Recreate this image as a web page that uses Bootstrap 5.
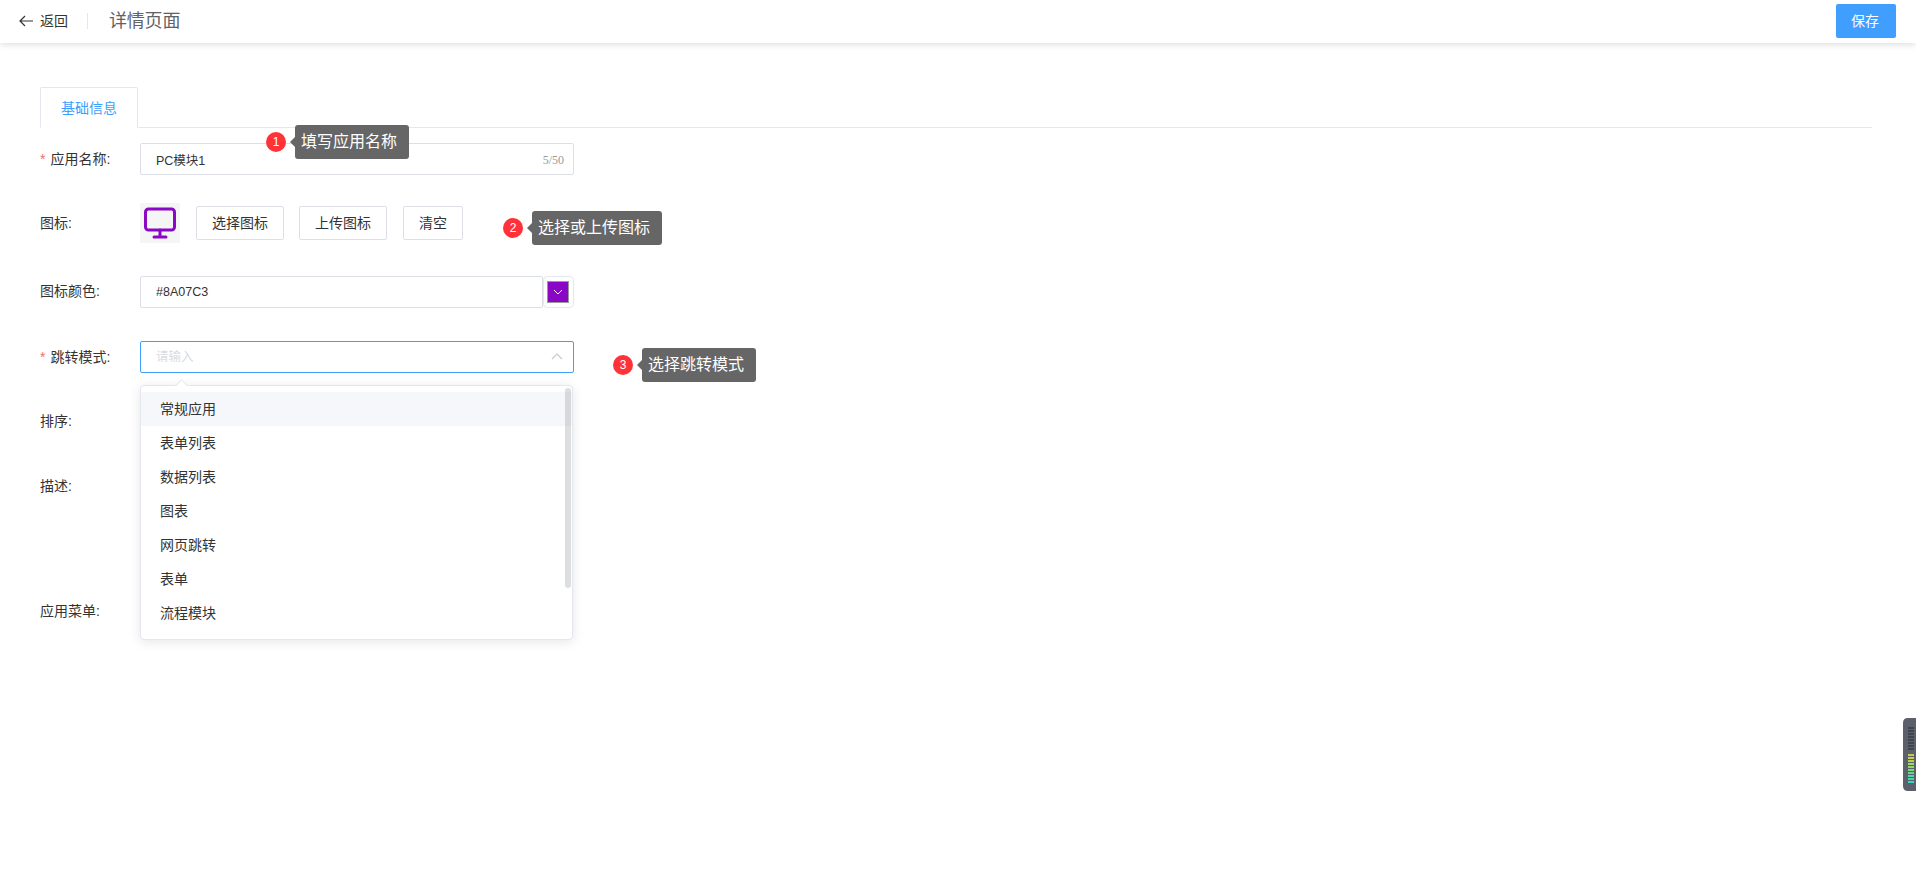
<!DOCTYPE html>
<html lang="zh-CN">
<head>
    <meta charset="UTF-8">
    <meta name="viewport" content="width=device-width, initial-scale=1">
    <title>详情页面</title>
    <link href="https://cdn.jsdelivr.net/npm/bootstrap@5.3.0/dist/css/bootstrap.min.css" rel="stylesheet">
    <style>
        body { font-family: "Liberation Sans", "Noto Sans CJK SC", sans-serif; font-size: 14px; color: #333; background: #fff; overflow: hidden; }
        .top-bar { height: 43px; padding: 0 20px 1px 19px; background: #fff; box-shadow: 0 2px 6px rgba(0, 0, 0, .12); }
        .back-link { color: #333; text-decoration: none; line-height: 20px; }
        .back-arrow { margin-right: 7px; }
        .bar-divider { width: 1px; height: 16px; background: #e4e7ed; margin: 0 21px 0 19px; }
        .page-title { font-size: 18px; letter-spacing: -.2px; color: #606266; line-height: 24px; }
        .save-btn { width: 60px; height: 34px; padding: 0 2px 0 0; font-size: 14px; background: #409eff; border: 0; border-radius: 2px; color: #fff; }
        .page-body { padding: 44px 44px 0 40px; }
        .nav-tabs { --bs-nav-tabs-border-color: #e4e7ed; --bs-nav-tabs-border-radius: 2px; --bs-nav-tabs-link-active-border-color: #e4e7ed #e4e7ed #fff; --bs-nav-tabs-link-active-color: #409eff; }
        .nav-tabs .nav-link { width: 98px; height: 41px; padding: 0; line-height: 41px; text-align: center; font-size: 14px; }
        .form-line { margin-bottom: 32px; }
        .form-line.first-line { margin-top: 15px; margin-bottom: 28px; }
        .form-line.icon-line { margin-bottom: 33px; }
        .form-line.color-line { margin-bottom: 33px; }
        .line-label { width: 100px; flex: none; line-height: 20px; }
        .color-line .line-label { padding-bottom: 2px; }
        .desc-label { padding-top: 7px; }
        .required-mark { color: #f56c6c; margin-right: 5px; }
        .field-box { width: 434px; }
        .field-box.under-menu { width: 432px; }
        .form-control.plain-input { height: 32px; padding: 0 15px; font-size: 12.5px; color: #333; border-color: #dcdfe6; border-radius: 2px; box-shadow: none; }
        .form-control.plain-input::placeholder { color: #dadce0; }
        .form-control.open-input { border-color: #409eff; }
        .form-control.plain-area { height: 94px; border-color: #dcdfe6; border-radius: 2px; }
        .word-count { right: 10px; top: 9px; font-family: "Liberation Serif", serif; font-size: 12px; line-height: 16px; color: #999; }
        .up-arrow { right: 11px; top: 11px; }
        .icon-preview { width: 40px; height: 40px; background: #f5f5f5; border-radius: 2px; margin-right: 16px; }
        .plain-btn { height: 34px; padding: 0 15px; font-size: 14px; line-height: 32px; color: #333; background: #fff; border: 1px solid #dcdfe6; border-radius: 2px; margin-right: 15px; }
        .plain-btn.wide-gap { margin-right: 16px; }
        .color-input { width: 403px; flex: none; }
        .color-picker { width: 31px; height: 32px; padding-right: 1px; border: 1px solid #e4e7ed; border-radius: 4px; }
        .color-swatch { width: 22px; height: 22px; background: #8a07c3; border: 1px solid #999; }
        .tip-wrap { height: 34px; z-index: 5; }
        .tip-one { left: 226px; top: -18px; }
        .tip-two { left: 463px; top: 8px; }
        .tip-three { left: 573px; top: 7px; }
        .tip-num { width: 20px; height: 20px; margin-right: 9px; border-radius: 50%; background: #ff3237; color: #fff; font-size: 12px; line-height: 20px; text-align: center; }
        .tip-text { height: 34px; padding: 0 12px 0 6px; background: #666; color: #fff; font-size: 16px; line-height: 34px; border-radius: 3px; white-space: nowrap; }
        .tip-text::before { content: ""; position: absolute; left: -5px; top: 12px; border: 5px solid transparent; border-left: 0; border-right-color: #666; }
        .mode-menu { left: 100px; top: 44px; width: 433px; height: 255px; padding: 6px 0 0; margin: 0; border: 1px solid #e4e7ed; border-radius: 4px; box-shadow: 0 2px 12px rgba(0, 0, 0, .1); z-index: 4; }
        .mode-menu::before { content: ""; position: absolute; left: 36px; top: -5px; width: 9px; height: 9px; background: #fff; border-left: 1px solid #e4e7ed; border-top: 1px solid #e4e7ed; transform: rotate(45deg); }
        .mode-menu .dropdown-item { height: 34px; padding: 0 19px; line-height: 34px; font-size: 14px; color: #333; }
        .mode-menu .dropdown-item.hovered { background: #f5f7fa; }
        .menu-scroll { right: 1px; top: 2px; width: 6px; height: 200px; background: rgba(144, 147, 153, .3); border-radius: 3px; }
        .side-widget { position: fixed; right: 0; top: 718px; }
    </style>
</head>
<body>
    <header class="top-bar d-flex align-items-center justify-content-between">
        <div class="d-flex align-items-center">
            <a href="#" class="back-link d-flex align-items-center">
                <svg width="14" height="12" viewBox="0 0 14 12" class="back-arrow" fill="none" stroke="#333" stroke-width="1.2"><path d="M14 6H1M6 1 1 6l5 5"/></svg>
                返回
            </a>
            <span class="bar-divider"></span>
            <span class="page-title">详情页面</span>
        </div>
        <button class="save-btn" type="button">保存</button>
    </header>

    <div class="page-body">
        <ul class="nav nav-tabs">
            <li class="nav-item"><a class="nav-link active" href="#">基础信息</a></li>
        </ul>

        <div class="form-line first-line d-flex align-items-center position-relative">
            <label class="line-label"><span class="required-mark">*</span>应用名称:</label>
            <div class="field-box position-relative">
                <input type="text" class="form-control plain-input" value="PC模块1">
                <span class="word-count position-absolute">5/50</span>
            </div>
            <div class="tip-wrap tip-one position-absolute d-flex align-items-center">
                <span class="tip-num">1</span>
                <span class="tip-text position-relative">填写应用名称</span>
            </div>
        </div>

        <div class="form-line icon-line d-flex align-items-center position-relative">
            <label class="line-label">图标:</label>
            <div class="icon-preview d-flex align-items-center justify-content-center">
                <svg width="32" height="32" viewBox="0 0 32 32" fill="none" stroke="#8a07c3" stroke-width="3" stroke-linecap="round"><rect x="1.5" y="2" width="29" height="21" rx="3"/><path d="M16 23v6M10 30h12"/></svg>
            </div>
            <button class="plain-btn" type="button">选择图标</button>
            <button class="plain-btn wide-gap" type="button">上传图标</button>
            <button class="plain-btn" type="button">清空</button>
            <div class="tip-wrap tip-two position-absolute d-flex align-items-center">
                <span class="tip-num">2</span>
                <span class="tip-text position-relative">选择或上传图标</span>
            </div>
        </div>

        <div class="form-line color-line d-flex align-items-center">
            <label class="line-label">图标颜色:</label>
            <div class="field-box d-flex">
                <input type="text" class="form-control plain-input color-input" value="#8A07C3">
                <div class="color-picker d-flex align-items-center justify-content-center">
                    <div class="color-swatch d-flex align-items-center justify-content-center">
                        <svg width="10" height="6" viewBox="0 0 10 6" fill="none" stroke="#fff" stroke-width="1"><path d="m1 1 4 4 4-4"/></svg>
                    </div>
                </div>
            </div>
        </div>

        <div class="form-line d-flex align-items-center position-relative">
            <label class="line-label"><span class="required-mark">*</span>跳转模式:</label>
            <div class="field-box position-relative">
                <input type="text" class="form-control plain-input open-input" placeholder="请输入">
                <svg class="up-arrow position-absolute" width="12" height="8" viewBox="0 0 12 8" fill="none" stroke="#c7c9ce" stroke-width="1.2"><path d="m1 7 5-5 5 5"/></svg>
            </div>
            <ul class="mode-menu dropdown-menu d-block list-unstyled">
                <li><a class="dropdown-item hovered" href="#">常规应用</a></li>
                <li><a class="dropdown-item" href="#">表单列表</a></li>
                <li><a class="dropdown-item" href="#">数据列表</a></li>
                <li><a class="dropdown-item" href="#">图表</a></li>
                <li><a class="dropdown-item" href="#">网页跳转</a></li>
                <li><a class="dropdown-item" href="#">表单</a></li>
                <li><a class="dropdown-item" href="#">流程模块</a></li>
                <li class="menu-scroll position-absolute"></li>
            </ul>
            <div class="tip-wrap tip-three position-absolute d-flex align-items-center">
                <span class="tip-num">3</span>
                <span class="tip-text position-relative">选择跳转模式</span>
            </div>
        </div>

        <div class="form-line d-flex align-items-center">
            <label class="line-label">排序:</label>
            <div class="field-box under-menu"><input type="text" class="form-control plain-input"></div>
        </div>

        <div class="form-line d-flex align-items-start">
            <label class="line-label desc-label">描述:</label>
            <div class="field-box under-menu"><textarea class="form-control plain-area"></textarea></div>
        </div>

        <div class="form-line d-flex align-items-center">
            <label class="line-label">应用菜单:</label>
            <div class="field-box under-menu"><input type="text" class="form-control plain-input"></div>
        </div>
    </div>

    <svg class="side-widget" width="13" height="73" viewBox="0 0 13 73">
        <path d="M13 0H5Q0 0 0 5v63q0 5 5 5h8z" fill="#5b606b"/>
        <g fill="#3f444d">
            <rect x="5" y="9" width="6" height="2"/><rect x="5" y="12" width="6" height="2"/><rect x="5" y="15" width="6" height="2"/><rect x="5" y="18" width="6" height="2"/><rect x="5" y="21" width="6" height="2"/><rect x="5" y="24" width="6" height="2"/><rect x="5" y="27" width="6" height="2"/><rect x="5" y="30" width="6" height="2"/>
        </g>
        <rect x="5" y="36" width="6" height="2" fill="#c9c94f"/><rect x="5" y="39" width="6" height="2" fill="#c4cd52"/><rect x="5" y="42" width="6" height="2" fill="#b5d158"/><rect x="5" y="45" width="6" height="2" fill="#a3d45f"/><rect x="5" y="48" width="6" height="2" fill="#8fd56a"/><rect x="5" y="51" width="6" height="2" fill="#78d67c"/><rect x="5" y="54" width="6" height="2" fill="#62d68e"/><rect x="5" y="57" width="6" height="2" fill="#4ed7a0"/><rect x="5" y="60" width="6" height="2" fill="#3fd8ae"/><rect x="5" y="63" width="6" height="2" fill="#35d8b8"/>
    </svg>

    <script src="https://cdn.jsdelivr.net/npm/bootstrap@5.3.0/dist/js/bootstrap.bundle.min.js"></script>
</body>
</html>
